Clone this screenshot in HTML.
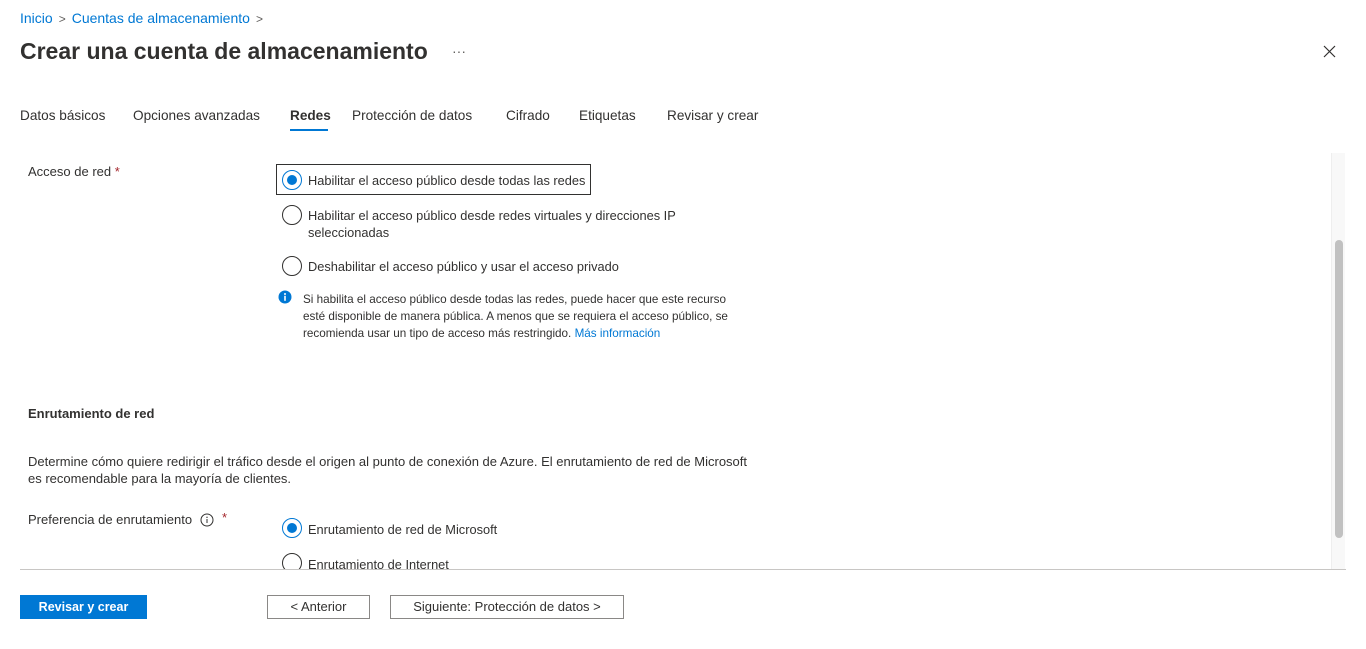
<!DOCTYPE html>
<html><head><meta charset="utf-8"><style>
*{margin:0;padding:0;box-sizing:border-box}
body{width:1366px;height:649px;overflow:hidden;background:#fff;font-family:"Segoe UI","Liberation Sans",sans-serif;color:#323130;position:relative}
.a{position:absolute;white-space:nowrap}
.bc{font-size:14px;color:#0078d4;top:10px;left:20px}
.bc span{color:#605e5c;margin:0 6px;font-size:12px}
.title{font-size:23px;font-weight:600;left:20px;top:38px;color:#323130}
.tab{font-size:13.6px;top:108px}
.lbl{font-size:13px}
.rl{font-size:12.8px}
.radio{position:absolute;width:20px;height:20px;border:1px solid #323130;border-radius:50%}
.radio.on{border-color:#0078d4}
.radio.on::after{content:"";position:absolute;left:4px;top:4px;width:10px;height:10px;border-radius:50%;background:#0078d4}
.btn{position:absolute;height:24px;font-size:13px;text-align:center;line-height:22px;border:1px solid #8a8886;background:#fff}
</style></head><body>
<div class="a bc">Inicio<span>&gt;</span>Cuentas de almacenamiento<span>&gt;</span></div>
<div class="a title">Crear una cuenta de almacenamiento</div>
<div class="a" style="left:452px;top:43px;font-size:14px;color:#605e5c">···</div>
<svg class="a" style="left:1323px;top:45px" width="13" height="13" viewBox="0 0 13 13"><path d="M1 1L12 12M12 1L1 12" stroke="#323130" stroke-width="1.2"/></svg>

<div class="a tab" style="left:20px">Datos básicos</div>
<div class="a tab" style="left:133px">Opciones avanzadas</div>
<div class="a tab" style="left:290px;font-weight:600">Redes</div>
<div class="a" style="left:290px;top:129px;width:38px;height:2px;background:#0078d4"></div>
<div class="a tab" style="left:352px">Protección de datos</div>
<div class="a tab" style="left:506px">Cifrado</div>
<div class="a tab" style="left:579px">Etiquetas</div>
<div class="a tab" style="left:667px">Revisar y crear</div>

<div class="a lbl" style="left:28px;top:164px">Acceso de red <span style="color:#a4262c">*</span></div>
<div class="a" style="left:276px;top:164px;width:315px;height:31px;border:1px solid #323130"></div>
<div class="radio on" style="left:282px;top:170px"></div>
<div class="a rl" style="left:308px;top:173px">Habilitar el acceso público desde todas las redes</div>
<div class="radio" style="left:282px;top:205px"></div>
<div class="a rl" style="left:308px;top:207px;line-height:17px">Habilitar el acceso público desde redes virtuales y direcciones IP<br>seleccionadas</div>
<div class="radio" style="left:282px;top:256px"></div>
<div class="a rl" style="left:308px;top:259px">Deshabilitar el acceso público y usar el acceso privado</div>
<svg class="a" style="left:278px;top:290px" width="14" height="14" viewBox="0 0 14 14"><circle cx="7" cy="7" r="6.5" fill="#0078d4"/><rect x="6.2" y="5.8" width="1.6" height="5" fill="#fff"/><circle cx="7" cy="4" r="1" fill="#fff"/></svg>
<div class="a" style="left:303px;top:291px;font-size:11.7px;line-height:17px">Si habilita el acceso público desde todas las redes, puede hacer que este recurso<br>esté disponible de manera pública. A menos que se requiera el acceso público, se<br>recomienda usar un tipo de acceso más restringido. <span style="color:#0078d4">Más información</span></div>

<div class="a" style="left:28px;top:406px;font-size:13px;font-weight:600">Enrutamiento de red</div>
<div class="a lbl" style="left:28px;top:453px;line-height:17px">Determine cómo quiere redirigir el tráfico desde el origen al punto de conexión de Azure. El enrutamiento de red de Microsoft<br>es recomendable para la mayoría de clientes.</div>
<div class="a lbl" style="left:28px;top:512px">Preferencia de enrutamiento</div>
<svg class="a" style="left:200px;top:513px" width="14" height="14" viewBox="0 0 14 14"><circle cx="7" cy="7" r="6" fill="none" stroke="#323130"/><rect x="6.5" y="6" width="1" height="4" fill="#323130"/><circle cx="7" cy="4.3" r=".7" fill="#323130"/></svg>
<div class="a lbl" style="left:222px;top:510px;color:#a4262c">*</div>
<div class="radio on" style="left:282px;top:518px"></div>
<div class="a rl" style="left:308px;top:522px">Enrutamiento de red de Microsoft</div>
<div style="position:absolute;left:0;top:550px;width:1366px;height:19px;overflow:hidden">
<div class="radio" style="left:282px;top:3px"></div>
<div class="a rl" style="left:308px;top:7px">Enrutamiento de Internet</div>
</div>

<div class="a" style="left:1331px;top:153px;width:14px;height:417px;background:#f8f8f8;border-left:1px solid #eee"></div>
<div class="a" style="left:1335px;top:240px;width:8px;height:298px;background:#c1c1c1;border-radius:4px"></div>
<div class="a" style="left:20px;top:569px;width:1326px;height:1px;background:#c8c6c4"></div>

<div class="btn" style="left:20px;top:595px;width:127px;background:#0078d4;border-color:#0078d4;color:#fff;font-weight:600;font-size:12.5px">Revisar y crear</div>
<div class="btn" style="left:267px;top:595px;width:103px">&lt; Anterior</div>
<div class="btn" style="left:390px;top:595px;width:234px">Siguiente: Protección de datos &gt;</div>
</body></html>
